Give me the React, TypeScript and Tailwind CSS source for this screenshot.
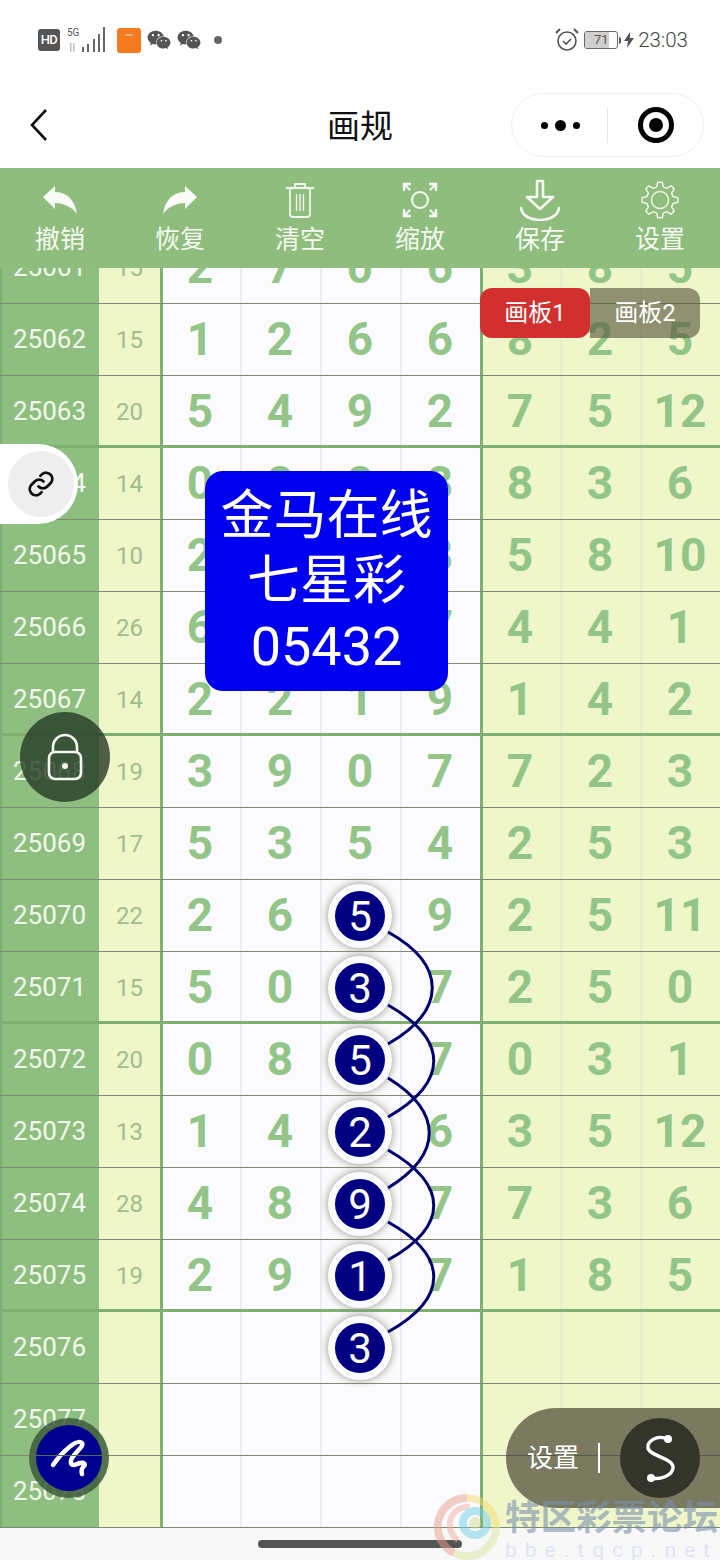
import { FaWeixin } from "react-icons/fa";

const rows: [string, string, string[], string[]][] = [
  ["25061", "15", ["2", "7", "0", "6"], ["3", "8", "5"]],
  ["25062", "15", ["1", "2", "6", "6"], ["8", "2", "5"]],
  ["25063", "20", ["5", "4", "9", "2"], ["7", "5", "12"]],
  ["25064", "14", ["0", "8", "8", "8"], ["8", "3", "6"]],
  ["25065", "10", ["2", "3", "3", "8"], ["5", "8", "10"]],
  ["25066", "26", ["6", "0", "2", "7"], ["4", "4", "1"]],
  ["25067", "14", ["2", "2", "1", "9"], ["1", "4", "2"]],
  ["25068", "19", ["3", "9", "0", "7"], ["7", "2", "3"]],
  ["25069", "17", ["5", "3", "5", "4"], ["2", "5", "3"]],
  ["25070", "22", ["2", "6", "5", "9"], ["2", "5", "11"]],
  ["25071", "15", ["5", "0", "3", "7"], ["2", "5", "0"]],
  ["25072", "20", ["0", "8", "5", "7"], ["0", "3", "1"]],
  ["25073", "13", ["1", "4", "2", "6"], ["3", "5", "12"]],
  ["25074", "28", ["4", "8", "9", "7"], ["7", "3", "6"]],
  ["25075", "19", ["2", "9", "1", "7"], ["1", "8", "5"]],
  ["25076", "", ["", "", "3", ""], ["", "", ""]],
  ["25077", "", ["", "", "", ""], ["", "", ""]],
  ["25078", "", ["", "", "", ""], ["", "", ""]],
];

const thickRows = ["25063", "25067", "25071", "25075"];
const circledFrom = 9;
const circledTo = 15;

function gearPath(cx: number, cy: number, outer: number, inner: number, teeth: number) {
  const pts: string[] = [];
  for (let i = 0; i < teeth; i++) {
    const a = (i * 2 * Math.PI) / teeth - Math.PI / 2;
    const step = (2 * Math.PI) / teeth;
    const list: [number, number][] = [
      [inner, a - step * 0.32],
      [outer, a - step * 0.16],
      [outer, a + step * 0.16],
      [inner, a + step * 0.32],
    ];
    for (const [r, t] of list) {
      pts.push(`${(cx + r * Math.cos(t)).toFixed(2)} ${(cy + r * Math.sin(t)).toFixed(2)}`);
    }
  }
  return "M" + pts.join("L") + "Z";
}

function Row({ row, index }: { row: (typeof rows)[number]; index: number }) {
  const [id, sum, mid, right] = row;
  const thick = thickRows.includes(id);
  const circled = index >= circledFrom && index <= circledTo;
  return (
    <div className="relative flex h-[72px]">
      <div className="flex w-[99px] items-center justify-center border-l-2 border-[#7fae72] bg-[#8fbf80] pr-[2px] pb-[2px] text-[26px] text-[#f2f9ec]">
        {id}
      </div>
      <div className="flex w-[61px] items-center justify-center bg-[#eff6c9] pb-[1px] text-[24px] text-[#a3bd8c]">{sum}</div>
      {mid.map((d, i) => (
        <div
          key={i}
          className={`relative flex w-[80px] items-center justify-center bg-[#fbfbfd] pb-[2px] text-[46px] font-bold text-[#93c588] ${
            i === 0 ? "shadow-[inset_3px_0_0_#7fb072]" : "shadow-[inset_2px_0_0_#ebebf0]"
          }`}
        >
          {circled && i === 2 ? (
            <div className="absolute top-1/2 left-1/2 z-10 flex h-[64px] w-[64px] -translate-x-1/2 -translate-y-1/2 items-center justify-center rounded-full border-[7px] border-[#fbfbfb] bg-[#000080] text-[42px] font-normal text-white shadow-[0_0_8px_#8f8f85]">
              {d}
            </div>
          ) : (
            d
          )}
        </div>
      ))}
      {right.map((d, i) => (
        <div
          key={i}
          className={`flex w-[80px] items-center justify-center bg-[#eff6c9] pb-[2px] text-[46px] font-bold text-[#93c588] ${
            i === 0 ? "shadow-[inset_3px_0_0_#7fb072]" : "shadow-[inset_2px_0_0_#e6eecb]"
          }`}
        >
          {d}
        </div>
      ))}
      <div className={`absolute right-0 bottom-0 left-0 ${thick ? "h-[3px] bg-[#7fb072]" : "h-px bg-[#7d8a72]"}`} />
    </div>
  );
}

function ToolItem({ icon, label }: { icon: React.ReactNode; label: string }) {
  return (
    <div className="flex w-[120px] flex-col items-center">
      <div className="flex h-[46px] w-[46px] items-center justify-center">{icon}</div>
      <div className="text-[25px] leading-[34px] text-[#f6faf2]">{label}</div>
    </div>
  );
}

export default function App() {
  return (
    <div className="relative h-[1560px] w-[720px] overflow-hidden bg-white font-['Roboto','Noto_Sans_CJK_SC',sans-serif]">
      {/* Status bar */}
      <div className="flex h-[72px] items-center justify-between pt-[8px] pr-[32px] pl-[38px]">
        <div className="flex items-center">
          <div className="flex h-[22px] w-[22px] items-center justify-center rounded-[3px] bg-[#555] text-[13px] font-medium tracking-[-0.5px] text-white">HD</div>
          <svg width="40" height="26" viewBox="0 0 40 26" className="ml-[6px]">
            <text x="1" y="9" fontSize="10" fontFamily="Roboto" fill="#555">5G</text>
            <g fill="#666">
              <rect x="4" y="16" width="1.5" height="9" opacity="0.4" />
              <rect x="7" y="16" width="1.5" height="9" opacity="0.4" />
              <rect x="16" y="20" width="2" height="5" />
              <rect x="21" y="17" width="2" height="8" />
              <rect x="27" y="12" width="2" height="13" />
              <rect x="32" y="7" width="2" height="18" />
              <rect x="37" y="0" width="2" height="25" />
            </g>
          </svg>
          <div className="ml-[11px] flex h-[25px] w-[24px] justify-center rounded-[3px] bg-[#f57a22]">
            <div className="mt-[6px] h-[2px] w-[8px] rounded-b-full bg-[#ffb37a]" />
          </div>
          <FaWeixin className="ml-[6px] text-[24px] text-[#555]" />
          <FaWeixin className="ml-[6px] text-[24px] text-[#555]" />
          <div className="ml-[13px] h-[8px] w-[8px] rounded-full bg-[#666]" />
        </div>
        <div className="flex items-center">
          <svg width="26" height="26" viewBox="0 0 26 26" fill="none" stroke="#555" strokeWidth="1.6">
            <circle cx="13" cy="14" r="9" />
            <path d="M9 14l3 3 5-5" />
            <path d="M2 6l4-4M24 6l-4-4" strokeWidth="2" />
          </svg>
          <div className="relative ml-[4px] flex h-[18px] w-[34px] items-center justify-center overflow-hidden rounded-[3px] border border-[#666] text-[13px] text-[#555]">
            <div className="absolute top-0 bottom-0 left-0 w-[24px] bg-[#d0d0d0]" />
            <span className="relative">71</span>
          </div>
          <div className="ml-px h-[7px] w-[2px] rounded-r bg-[#555]" />
          <svg width="12" height="16" viewBox="0 0 12 16" className="ml-[2px]" fill="#555">
            <path d="M7 0 1 9h4l-1 7 7-10H7z" />
          </svg>
          <span className="ml-[3px] text-[20.5px] font-light text-[#444]">23:03</span>
        </div>
      </div>

      {/* Nav bar */}
      <div className="relative flex h-[96px] items-center justify-center pt-[14px]">
        <svg width="20" height="34" viewBox="0 0 20 34" fill="none" stroke="#111" strokeWidth="2.6" className="absolute top-[36px] left-[29px]">
          <path d="M17 2 3 17l14 15" />
        </svg>
        <div className="text-[33px] text-[#111]">画规</div>
        <div className="absolute top-[21px] right-[16px] flex h-[64px] w-[193px] items-center rounded-full border border-[#f0f0f0]">
          <div className="flex w-[95px] items-center justify-center gap-[7px] pl-[2px]">
            <div className="h-[7px] w-[7px] rounded-full bg-black" />
            <div className="h-[11px] w-[11px] rounded-full bg-black" />
            <div className="h-[7px] w-[7px] rounded-full bg-black" />
          </div>
          <div className="h-[36px] w-px bg-[#e6e6e6]" />
          <div className="flex flex-1 items-center justify-center">
            <div className="flex h-[36px] w-[36px] items-center justify-center rounded-full border-[5px] border-black">
              <div className="h-[14px] w-[14px] rounded-full bg-black" />
            </div>
          </div>
        </div>
      </div>

      {/* Toolbar */}
      <div className="flex h-[100px] items-start bg-[#8ebd7e] pt-[9px]">
        <ToolItem
          label="撤销"
          icon={
            <svg width="36" height="30" viewBox="0 0 36 30" fill="#f8fbf6">
              <path d="M1 12 13 1v6c12 0 20 8 22 22-5-7-13-11-22-11v6z" />
            </svg>
          }
        />
        <ToolItem
          label="恢复"
          icon={
            <svg width="36" height="30" viewBox="0 0 36 30" fill="#f8fbf6">
              <path d="M35 12 23 1v6C11 7 3 15 1 29c5-7 13-11 22-11v6z" />
            </svg>
          }
        />
        <ToolItem
          label="清空"
          icon={
            <svg width="30" height="36" viewBox="0 0 30 36" fill="none" stroke="#f0f7ec" strokeWidth="1.8">
              <path d="M1 6h28" strokeWidth="2.2" />
              <path d="M10 5V2h10v3" />
              <path d="M5 7v25a3 3 0 0 0 3 3h14a3 3 0 0 0 3-3V7" />
              <path d="M11.5 12v17M15 12v17M18.5 12v17" strokeWidth="1.4" />
            </svg>
          }
        />
        <ToolItem
          label="缩放"
          icon={
            <svg width="36" height="36" viewBox="0 0 36 36" fill="none" stroke="#f6faf2" strokeWidth="2.4">
              <circle cx="18" cy="18" r="8" strokeWidth="2" />
              <path d="M2 9V2h7M2 2l6 6M34 9V2h-7M34 2l-6 6M2 27v7h7M2 34l6-6M34 27v7h-7M34 34l-6-6" />
            </svg>
          }
        />
        <ToolItem
          label="保存"
          icon={
            <svg width="42" height="42" viewBox="0 0 42 42" fill="none" stroke="#f6faf2" strokeWidth="2.6" strokeLinejoin="round" strokeLinecap="round">
              <path d="M18 2h6v16h10L21 30 8 18h10z" />
              <path d="M2 29c2 16 36 16 38 0" />
            </svg>
          }
        />
        <ToolItem
          label="设置"
          icon={
            <svg width="38" height="38" viewBox="0 0 38 38" fill="none" stroke="#eef6ea" strokeWidth="1.5" strokeLinejoin="round">
              <path d={gearPath(19, 19, 18, 13.5, 8)} />
              <circle cx="19" cy="19" r="8.5" />
            </svg>
          }
        />
      </div>

      {/* Table */}
      <div className="h-[1260px] overflow-hidden">
        <div className="-mt-[36px]">
          {rows.map((r, i) => (
            <Row key={r[0]} row={r} index={i} />
          ))}
        </div>
      </div>

      {/* Bottom area */}
      <div className="flex h-[32px] items-start justify-center bg-[#f8f8f8] pt-[12px]">
        <div className="h-[8px] w-[204px] rounded-full bg-[#555]" />
      </div>

      {/* Curves */}
      <svg className="pointer-events-none absolute top-0 left-0 z-10" width="720" height="1560" fill="none" stroke="#000070" strokeWidth="3">
        <path d="M388 932C447 965 447 1010 388 1044" />
        <path d="M388 1005C449 1040 449 1082 388 1117" />
        <path d="M388 1078C443 1112 443 1154 388 1188" />
        <path d="M388 1150C449 1185 449 1226 388 1260" />
        <path d="M388 1222C449 1256 449 1298 388 1332" />
      </svg>

      {/* Board tabs */}
      <div className="absolute top-[288px] left-[480px] z-20 flex h-[50px] w-[220px] text-[24px] text-white">
        <div className="flex w-[110px] items-center justify-center rounded-[12px] bg-[#d2302f]">画板1</div>
        <div className="flex w-[110px] items-center justify-center rounded-r-[12px] bg-[#5a5a40]/65">画板2</div>
      </div>

      {/* Blue card */}
      <div className="absolute top-[471px] left-[205px] z-20 flex h-[220px] w-[243px] flex-col items-center justify-center rounded-[18px] bg-[#0000ee] text-[53px] leading-[65px] text-white">
        <div>金马在线</div>
        <div>七星彩</div>
        <div className="text-[54px]">05432</div>
      </div>

      {/* Link button */}
      <div className="absolute top-[444px] left-0 z-20 flex h-[80px] w-[78px] items-center justify-center rounded-r-full bg-white pl-[3px]">
        <div className="flex h-[66px] w-[66px] items-center justify-center rounded-full bg-[#eeeeee]">
          <svg width="30" height="30" viewBox="0 0 24 24" fill="none" stroke="#111" strokeWidth="2.2" strokeLinecap="round">
            <path d="M10 14a5 5 0 0 0 7 0l3-3a5 5 0 0 0-7-7l-1.5 1.5" />
            <path d="M14 10a5 5 0 0 0-7 0l-3 3a5 5 0 0 0 7 7l1.5-1.5" />
          </svg>
        </div>
      </div>

      {/* Lock */}
      <div className="absolute top-[712px] left-[20px] z-20 flex h-[90px] w-[90px] items-center justify-center rounded-full bg-[#243a24]/80">
        <svg width="36" height="48" viewBox="0 0 36 48" fill="none" stroke="#f4f8f0" strokeWidth="2.6">
          <rect x="2" y="19" width="32" height="27" rx="6" />
          <path d="M6 19v-5a12 12 0 0 1 24 0v5" />
          <circle cx="18" cy="33" r="3" fill="#f4f8f0" stroke="none" />
        </svg>
      </div>

      {/* Pen */}
      <div className="absolute top-[1418px] left-[29px] z-20 flex h-[80px] w-[80px] items-center justify-center overflow-hidden rounded-full bg-[#3c5a3c]/85">
        <div className="flex h-[66px] w-[66px] items-center justify-center rounded-full bg-[#000090]">
          <svg width="44" height="44" viewBox="0 0 44 44" fill="none" stroke="#fff" strokeWidth="4.5" strokeLinecap="round" strokeLinejoin="round">
            <path d="M6 29C14 17 30 2 35 7c3 4-13 13-11 20 1 4 6 1 9 0 4-1 6 1 4 3-2 2-3 5-2 8" />
          </svg>
        </div>
        <div className="absolute top-[37px] right-0 left-0 h-px bg-[#5a6a50]" />
      </div>

      {/* Settings pill */}
      <div className="absolute top-[1408px] right-0 z-20 flex h-[100px] w-[214px] items-center overflow-hidden rounded-l-[50px] bg-[#7a7a60]">
        <div className="absolute top-[47px] right-0 left-0 h-px bg-[#55584a]" />
        <span className="relative ml-[21px] text-[26px] text-white">设置</span>
        <div className="relative ml-[19px] h-[30px] w-[2px] bg-white" />
        <div className="relative ml-[20px] flex h-[80px] w-[80px] items-center justify-center rounded-full bg-[#33352a]">
          <svg width="44" height="52" viewBox="0 0 44 52" fill="none" stroke="#fff" strokeWidth="3.4" strokeLinecap="round">
            <path d="M30 7C18 2 9 10 10 16c1 8 26 10 25 20-1 8-13 12-22 10" />
            <circle cx="30" cy="7" r="4" fill="#fff" stroke="none" />
            <circle cx="13" cy="46" r="4" fill="#fff" stroke="none" />
          </svg>
        </div>
      </div>

      {/* Watermark */}
      <div className="pointer-events-none absolute top-[1494px] left-[434px] z-30 flex h-[66px] w-[286px]">
        <svg width="67" height="66" viewBox="0 0 67 66" fill="none" strokeWidth="7" opacity="0.5" className="shrink-0">
          <path d="M33 4A29 29 0 0 0 20 59" stroke="#e8a090" strokeWidth="8" />
          <path d="M33 4A29 29 0 0 1 62 33" stroke="#f4dc70" strokeWidth="7" />
          <path d="M62 33A29 29 0 0 1 20 59" stroke="#dce8a0" strokeWidth="8" />
          <path d="M36 13A18 18 0 0 0 24 46" stroke="#f0b0a0" strokeWidth="6" />
          <circle cx="41" cy="29" r="12" stroke="#70cfe4" strokeWidth="8" />
          <circle cx="41" cy="29" r="6" fill="#d0dc90" stroke="none" />
        </svg>
        <div className="flex flex-col pl-[4px]">
          <div className="mt-[2px] text-[35.5px] leading-[44px] font-bold whitespace-nowrap text-[#7a90b0]/60">特区彩票论坛</div>
          <div className="-mt-[1px] text-[21px] leading-[22px] tracking-[8px] whitespace-nowrap text-[#b4c6e4]/40">bbe.tqcp.net</div>
        </div>
      </div>
    </div>
  );
}
